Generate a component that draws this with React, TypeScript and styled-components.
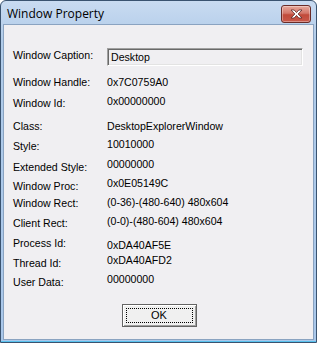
import React, { FC } from "react";
import styled, { createGlobalStyle } from "styled-components";

const GlobalStyle = createGlobalStyle`
  html, body {
    margin: 0;
    padding: 0;
    background: #ffffff;
  }
`;

const Frame = styled.div`
  box-sizing: border-box;
  width: 317px;
  height: 343px;
  display: flex;
  flex-direction: column;
  border: 1px solid #3a5370;
  border-radius: 6px 6px 0 0;
  background: linear-gradient(#c9dbf1, #b0cbe9 40px, #a9c7ea);
  padding: 0 2px 2px 2px;
  box-shadow: inset 0 -1px 0 #58c2ee;
`;

const TitleBar = styled.div`
  height: 23px;
  display: flex;
  align-items: center;
  justify-content: space-between;
  padding: 0 3px 0 4px;
`;

const TitleText = styled.span`
  font-family: "Open Sans", "Noto Sans", sans-serif;
  font-size: 12px;
  color: #000;
  margin-top: 2px;
`;

const CloseButton = styled.div`
  box-sizing: border-box;
  width: 30px;
  height: 18px;
  margin-top: 2px;
  border: 1px solid #6a2b27;
  border-radius: 3px;
  background: linear-gradient(#e7a99c, #d4776a 45%, #c14a3a 55%, #c9584a);
  box-shadow: inset 0 0 0 1px rgba(255, 255, 255, 0.35);
  display: flex;
  align-items: center;
  justify-content: center;
`;

const Client = styled.div`
  flex: 1;
  box-sizing: border-box;
  background: #f0eff2;
  border: 1px solid #8aa3c1;
  padding: 24px 10px 0 9px;
  font-family: "Liberation Sans", Arial, sans-serif;
  font-size: 10.6px;
  color: #000;
  display: flex;
  flex-direction: column;
`;

const Grid = styled.div`
  display: grid;
  grid-template-columns: 94px 1fr;
`;

const Label = styled.div<{ $h: number }>`
  height: ${(p) => p.$h}px;
  line-height: 13px;
  white-space: nowrap;
`;

const Value = styled.div<{ $h: number; $dy: number }>`
  height: ${(p) => p.$h}px;
  line-height: 13px;
  white-space: nowrap;
  position: relative;
  top: ${(p) => p.$dy}px;
`;

const TextBox = styled.div`
  box-sizing: border-box;
  height: 18px;
  margin-top: -1px;
  border-style: solid;
  border-width: 1px;
  border-color: #a0a0a0 #ffffff #ffffff #a0a0a0;
  box-shadow: inset 1px 1px 0 #696969, inset -1px -1px 0 #e3e3e3;
  padding: 2px 0 0 3px;
  line-height: 13px;
`;

const ButtonRow = styled.div`
  display: flex;
  justify-content: center;
  padding-left: 2px;
  margin-top: 9px;
`;

const OkButton = styled.div`
  box-sizing: border-box;
  width: 75px;
  height: 23px;
  border: 1px solid #646464;
  background: #f0f0f0;
  box-shadow: inset 1px 1px 0 #ffffff, inset -1px -1px 0 #a0a0a0;
  padding: 3px;
`;

const FocusRect = styled.div`
  box-sizing: border-box;
  height: 100%;
  border: 1px dotted #000;
  display: flex;
  align-items: center;
  justify-content: center;
  font-size: 11px;
  line-height: 13px;
`;

type Row = { label: string; value: string; h: number; dy: number };

const rows: Row[] = [
  { label: "Window Handle:", value: "0x7C0759A0", h: 21, dy: 0 },
  { label: "Window Id:", value: "0x00000000", h: 23, dy: -2 },
  { label: "Class:", value: "DesktopExplorerWindow", h: 20, dy: 0 },
  { label: "Style:", value: "10010000", h: 21, dy: -2 },
  { label: "Extended Style:", value: "00000000", h: 19, dy: -3 },
  { label: "Window Proc:", value: "0x0E05149C", h: 17, dy: -3 },
  { label: "Window Rect:", value: "(0-36)-(480-640) 480x604", h: 20, dy: -1 },
  { label: "Client Rect:", value: "(0-0)-(480-604) 480x604", h: 20, dy: -2 },
  { label: "Process Id:", value: "0xDA40AF5E", h: 20, dy: 2 },
  { label: "Thread Id:", value: "0xDA40AFD2", h: 19, dy: -3 },
  { label: "User Data:", value: "00000000", h: 19, dy: -3 },
];

const CloseIcon: FC = () => (
  <svg width="13" height="10" viewBox="0 0 13 10">
    <path
      d="M1 1 H4.2 L6.5 3.6 L8.8 1 H12 L8.1 5 L12 9 H8.8 L6.5 6.4 L4.2 9 H1 L4.9 5 Z"
      fill="#ffffff"
      stroke="#5a2a2a"
      strokeWidth="0.8"
      strokeLinejoin="round"
    />
  </svg>
);

export const App: FC = () => (
  <>
    <GlobalStyle />
    <Frame>
      <TitleBar>
        <TitleText>Window Property</TitleText>
        <CloseButton>
          <CloseIcon />
        </CloseButton>
      </TitleBar>
      <Client>
        <Grid>
          <Label $h={27}>Window Caption:</Label>
          <div>
            <TextBox>Desktop</TextBox>
          </div>
          {rows.map((r) => (
            <React.Fragment key={r.label}>
              <Label $h={r.h}>{r.label}</Label>
              <Value $h={r.h} $dy={r.dy}>
                {r.value}
              </Value>
            </React.Fragment>
          ))}
        </Grid>
        <ButtonRow>
          <OkButton>
            <FocusRect>OK</FocusRect>
          </OkButton>
        </ButtonRow>
      </Client>
    </Frame>
  </>
);

export default App;
